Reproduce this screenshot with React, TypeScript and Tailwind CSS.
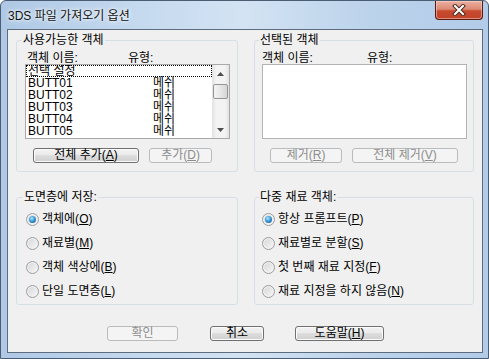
import clsx from 'clsx';
import type { ReactNode } from 'react';

const objects = ['BUTT01', 'BUTT02', 'BUTT03', 'BUTT04', 'BUTT05'];

function U({ c }: { c: string }) {
  return <span className="underline underline-offset-[1px]">{c}</span>;
}

function Button({ children, className, disabled }: { children: ReactNode; className: string; disabled?: boolean }) {
  return (
    <button
      type="button"
      disabled={disabled}
      className={clsx(
        'flex h-[15px] items-center justify-center rounded-[3px] border text-[12px] leading-[13px]',
        disabled
          ? 'border-[#b8bcbf] bg-[#f4f4f4] text-[#8d8d8d]'
          : 'border-[#707070] bg-[linear-gradient(#f2f2f2_0%,#ebebeb_45%,#dddddd_50%,#cfcfcf_100%)] text-black shadow-[inset_0_0_0_1px_#fbfbfb]',
        className,
      )}
    >
      {children}
    </button>
  );
}

function Radio({ checked, children }: { checked?: boolean; children: ReactNode }) {
  return (
    <div className="flex h-[24px] items-center gap-[3px]">
      <span className="flex h-[13px] w-[13px] items-center justify-center rounded-full border border-[#9a9ea3] bg-[linear-gradient(135deg,#d6d6d6,#f8f8f8)] shadow-[inset_0_0_0_1px_#f2f2f2]">
        {checked && (
          <span className="h-[7px] w-[7px] rounded-full bg-[radial-gradient(circle_at_40%_35%,#b3e8ff_0%,#3a9bd6_45%,#1b4f82_100%)]" />
        )}
      </span>
      <span className="text-[12px] leading-[14px]">{children}</span>
    </div>
  );
}

function Arrow({ down }: { down?: boolean }) {
  return (
    <svg width="7" height="4" viewBox="0 0 7 4">
      <path d={down ? 'M0 0H7L3.5 4Z' : 'M0 4H7L3.5 0Z'} fill="#4d4d4d" />
    </svg>
  );
}

function ScrollBar() {
  return (
    <div className="flex h-full w-[17px] flex-col bg-[linear-gradient(90deg,#e2e2e2,#f3f3f3_25%,#f3f3f3_75%,#e2e2e2)]">
      <div className="flex h-[17px] items-center justify-center">
        <Arrow />
      </div>
      <div className="mx-[1px] mt-[2px] h-[15px] rounded-[2px] border border-[#959595] bg-[linear-gradient(90deg,#f4f4f4,#e6e6e6_50%,#d6d6d6)]" />
      <div className="flex-1" />
      <div className="flex h-[17px] items-center justify-center">
        <Arrow down />
      </div>
    </div>
  );
}

function Legend({ children }: { children: ReactNode }) {
  return <legend className="-ml-[3px] px-[1px] text-[12px] leading-[14px]">{children}</legend>;
}

export default function App() {
  return (
    <div className="flex h-[359px] w-[489px] flex-col rounded-t-[6px] border border-[#4b5d72] bg-[linear-gradient(90deg,#aec8e5,#c6daef_30%,#d3e3f3_50%,#bcd3eb_75%,#b2cbe8)] font-['Liberation_Sans','Noto_Sans_CJK_KR',sans-serif] text-black antialiased">
      {/* 제목 표시줄 */}
      <div className="flex h-[28px] items-start justify-between">
        <div className="pl-[7px] pt-[7px] text-[12px] leading-[16px] text-[#111] [text-shadow:0_0_6px_#ffffff,0_0_3px_#ffffff]">
          3DS 파일 가져오기 옵션
        </div>
        <div className="mr-[5px] flex h-[19px] w-[48px] items-center justify-center rounded-b-[4px] border border-t-0 border-[#5a1a10] bg-[linear-gradient(#eab0a2_0%,#dd8a74_45%,#c74a2f_55%,#c2432a_100%)] shadow-[inset_0_0_0_1px_rgba(255,220,210,0.5)]">
          <svg width="14" height="12" viewBox="0 0 14 12">
            <path d="M3 2L11 10M11 2L3 10" stroke="#4a2a22" strokeWidth="4" strokeLinecap="square" />
            <path d="M3 2L11 10M11 2L3 10" stroke="#ffffff" strokeWidth="2" strokeLinecap="square" />
          </svg>
        </div>
      </div>

      {/* 클라이언트 영역 */}
      <div className="ml-[6px] mr-[5px] flex h-[324px] w-[476px] flex-col border border-[#5e6d7e] bg-[#f0f0f0] pt-[3px]">
        <div className="flex gap-[16px] pl-[8px]">
          <fieldset className="m-0 h-[139px] w-[222px] rounded-[3px] border border-[#d5dfe5] pb-0 pl-[8px] pr-[7px] pt-[6px]">
            <Legend>사용가능한 객체</Legend>
            <div className="flex h-[11px] text-[12px] leading-[11px]">
              <span className="w-[103px] pl-[2px]">객체 이름:</span>
              <span>유형:</span>
            </div>
            <div className="flex h-[75px] w-[205px] border border-[#a9a9a9] bg-white">
              <div className="flex-1 overflow-hidden text-[12px] leading-[12px]">
                <div className="h-[12px] border border-dotted border-black pl-[1px] leading-[10px]">선택 설정</div>
                {objects.map((name) => (
                  <div key={name} className="flex h-[12px]">
                    <span className="w-[127px] pl-[2px]">{name}</span>
                    <span className="opacity-[0.99]">메쉬</span>
                  </div>
                ))}
              </div>
              <ScrollBar />
            </div>
            <div className="mt-[9px] flex gap-[10px] pl-[8px]">
              <Button className="w-[106px]">
                전체 추가(<U c="A" />)
              </Button>
              <Button className="w-[63px]" disabled>
                추가(<U c="D" />)
              </Button>
            </div>
          </fieldset>

          <fieldset className="m-0 h-[139px] w-[220px] rounded-[3px] border border-[#d5dfe5] pb-0 pl-[7px] pr-[6px] pt-[6px]">
            <Legend>선택된 객체</Legend>
            <div className="flex h-[11px] text-[12px] leading-[11px]">
              <span className="w-[105px]">객체 이름:</span>
              <span>유형:</span>
            </div>
            <div className="h-[75px] w-[205px] border border-[#b4b4b4] bg-white" />
            <div className="mt-[9px] flex gap-[10px] pl-[8px]">
              <Button className="w-[72px]" disabled>
                제거(<U c="R" />)
              </Button>
              <Button className="w-[106px]" disabled>
                전체 제거(<U c="V" />)
              </Button>
            </div>
          </fieldset>
        </div>

        <div className="mt-[18px] flex gap-[16px] pl-[8px]">
          <fieldset className="m-0 h-[115px] w-[222px] rounded-[3px] border border-[#d5dfe5] pb-0 pl-[9px] pt-[3px]">
            <Legend>도면층에 저장:</Legend>
            <Radio checked>
              객체에(<U c="O" />)
            </Radio>
            <Radio>
              재료별(<U c="M" />)
            </Radio>
            <Radio>
              객체 색상에(<U c="B" />)
            </Radio>
            <Radio>
              단일 도면층(<U c="L" />)
            </Radio>
          </fieldset>

          <fieldset className="m-0 h-[115px] w-[220px] rounded-[3px] border border-[#d5dfe5] pb-0 pl-[7px] pt-[3px]">
            <Legend>다중 재료 객체:</Legend>
            <Radio checked>
              항상 프롬프트(<U c="P" />)
            </Radio>
            <Radio>
              재료별로 분할(<U c="S" />)
            </Radio>
            <Radio>
              첫 번째 재료 지정(<U c="F" />)
            </Radio>
            <Radio>
              재료 지정을 하지 않음(<U c="N" />)
            </Radio>
          </fieldset>
        </div>

        <div className="mt-[21px] flex pl-[99px]">
          <Button className="w-[71px]" disabled>
            확인
          </Button>
          <Button className="ml-[32px] w-[54px]">취소</Button>
          <Button className="ml-[31px] w-[89px]">
            도움말(<U c="H" />)
          </Button>
        </div>
      </div>
    </div>
  );
}
